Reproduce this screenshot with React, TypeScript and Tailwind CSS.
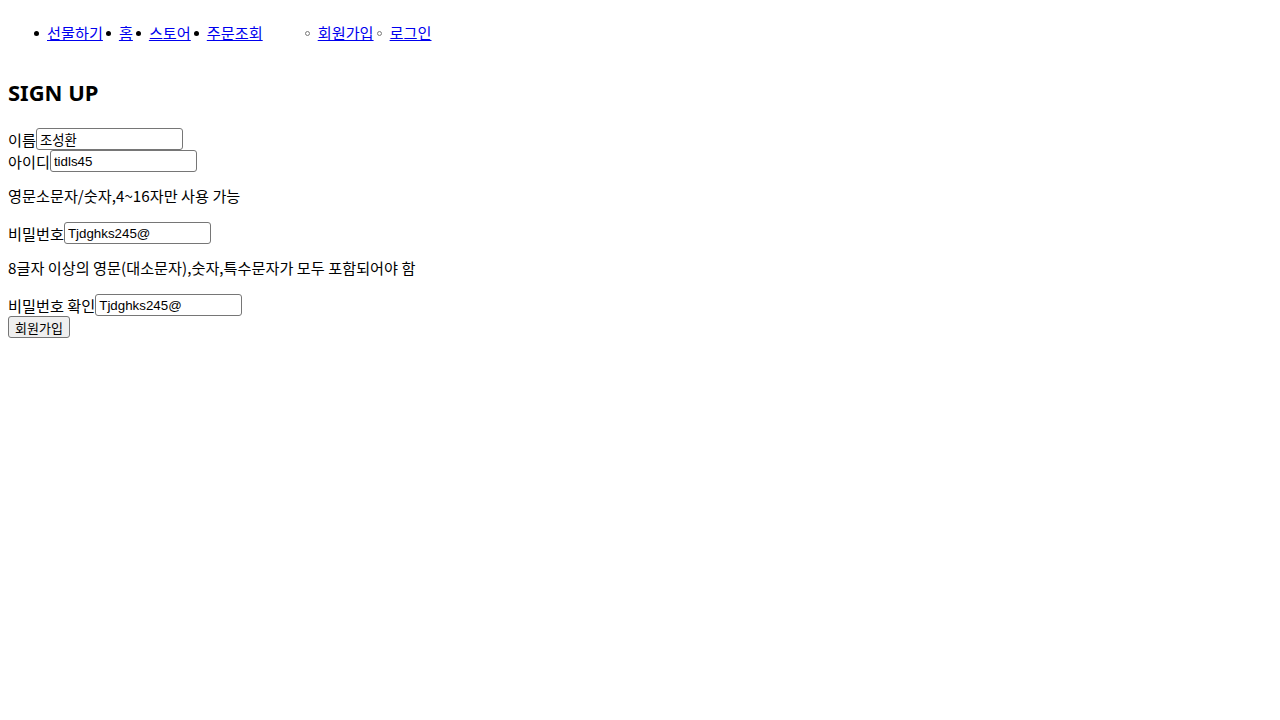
const mainMenu = ['선물하기', '홈', '스토어', '주문조회']
const userMenu = ['회원가입', '로그인']

function Field({ label, value, className = '' }: { label: string; value: string; className?: string }) {
  return (
    <div className={`flex items-center h-[22px] ${className}`}>
      <label>{label}</label>
      <input
        readOnly
        value={value}
        className="w-[147px] h-[22px] border border-[#767676] rounded-[3px] px-[3px] text-[13.33px] font-['Liberation_Sans','Noto_Sans_CJK_KR',sans-serif] text-black bg-white"
      />
    </div>
  )
}

export default function App() {
  return (
    <div className="p-2 bg-white min-h-screen text-black text-[15.2px] leading-[18px] font-['Noto_Sans_CJK_KR','Noto_Sans',sans-serif]">
      <nav className="flex mt-[15px] pl-[26px]">
        <ul className="flex gap-[3px]">
          {mainMenu.map((m) => (
            <li key={m} className="flex items-center">
              <span className="w-[5px] h-[5px] mt-[2px] rounded-full bg-black" />
              <a href="#" className="ml-[8px] text-[#0000ee] underline">{m}</a>
            </li>
          ))}
        </ul>
        <ul className="flex gap-[3px] ml-[42px]">
          {userMenu.map((m) => (
            <li key={m} className="flex items-center">
              <span className="w-[5px] h-[5px] mt-[2px] rounded-full border border-[#7a7a7a]" />
              <a href="#" className="ml-[8px] text-[#0000ee] underline">{m}</a>
            </li>
          ))}
        </ul>
      </nav>

      <h2 className="text-[22px] font-bold leading-[28px] mt-[37px] mb-[22px] font-['Noto_Sans',sans-serif]">SIGN UP</h2>

      <form>
        <Field label="이름" value="조성환" />
        <Field label="아이디" value="tidls45" />
        <p className="mt-[14px] mb-[18px]">영문소문자/숫자,4~16자만 사용 가능</p>
        <Field label="비밀번호" value="Tjdghks245@" />
        <p className="mt-[14px] mb-[18px]">8글자 이상의 영문(대소문자),숫자,특수문자가 모두 포함되어야 함</p>
        <Field label="비밀번호 확인" value="Tjdghks245@" className="mt-[2px]" />
        <button
          type="button"
          className="h-[22px] px-[6px] text-[13px] bg-[#efefef] border border-[#767676] rounded-[3px] font-['Noto_Sans_CJK_KR',sans-serif] leading-none"
        >
          회원가입
        </button>
      </form>
    </div>
  )
}
